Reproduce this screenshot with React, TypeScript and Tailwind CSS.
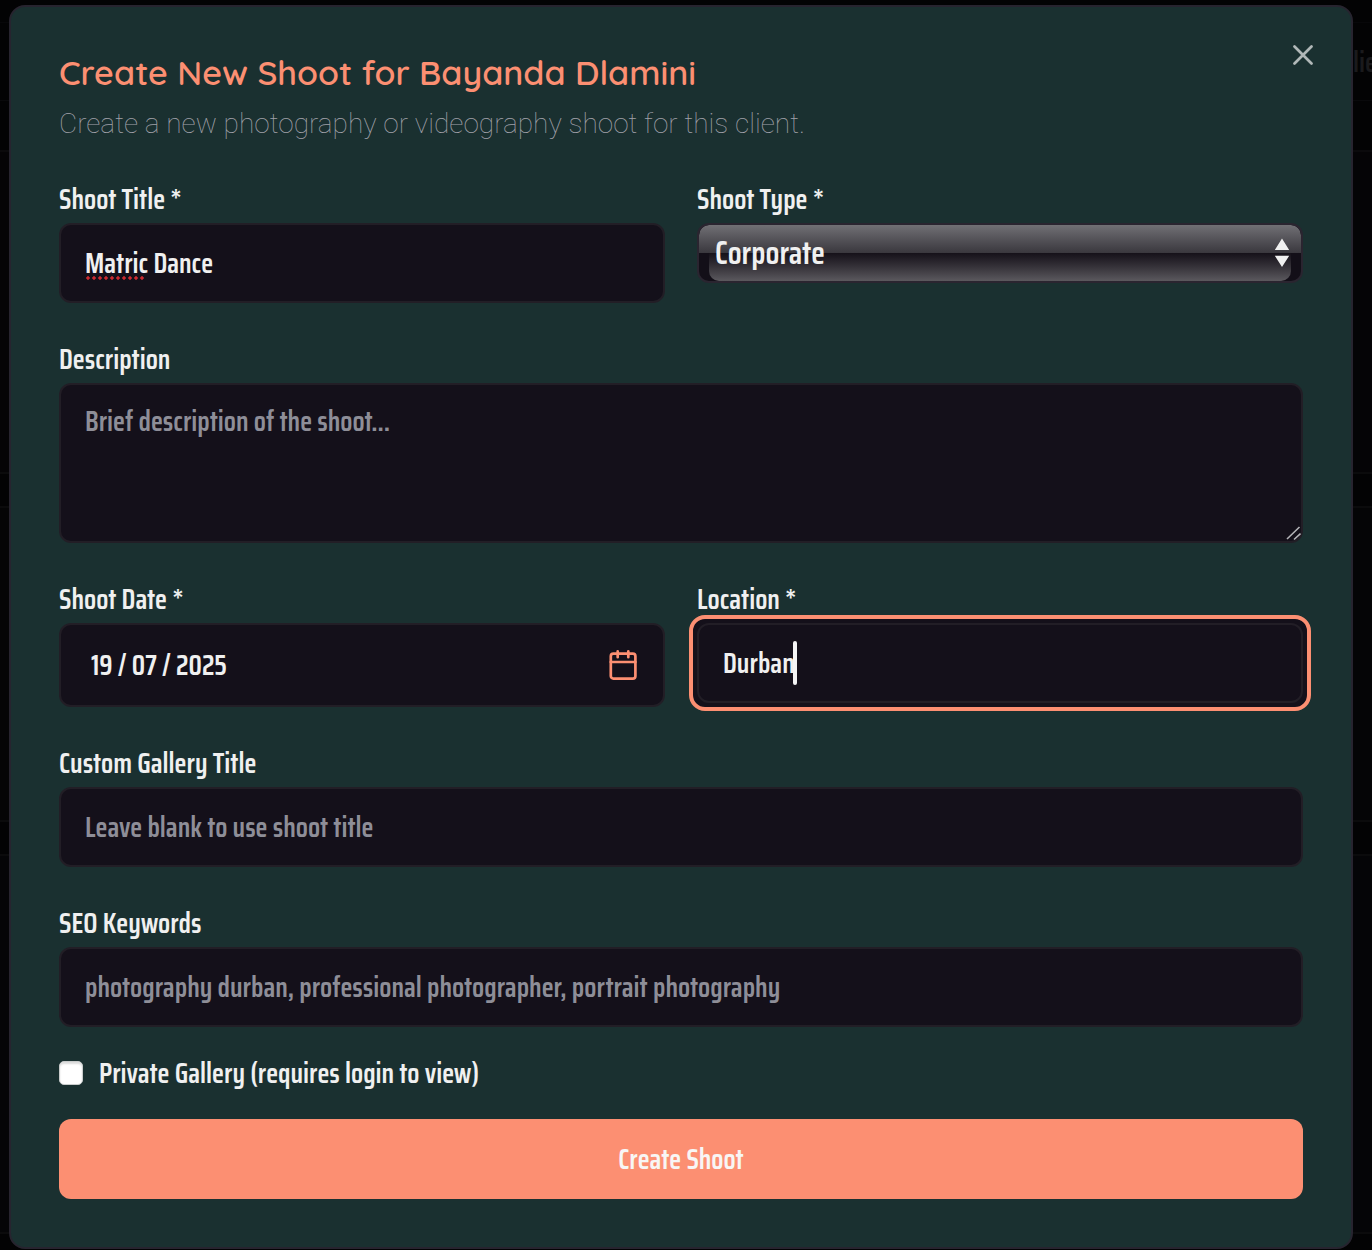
import type { ReactNode } from "react";

const bodyFont = "font-['Saira_Condensed','Roboto_Condensed',sans-serif]";

const fieldBase =
  "block w-full rounded-xl border-2 border-[#221e26] bg-[#14101a] px-6 text-[28px] leading-8 font-semibold text-[#f0f0f0] placeholder:text-[#8e8e98] outline-none";

function Field({ id, label, children }: { id: string; label: string; children: ReactNode }) {
  return (
    <div className="flex min-w-0 flex-1 flex-col gap-3">
      <label htmlFor={id} className="text-[28px] leading-6 font-semibold text-[#f0f0f0]">
        {label}
      </label>
      {children}
    </div>
  );
}

function CalendarIcon() {
  return (
    <svg width="28" height="30" viewBox="0 0 28 30" fill="none" stroke="#fc8f72" strokeWidth="2.7" strokeLinecap="round">
      <rect x="1.8" y="3.6" width="24.6" height="25" rx="2.6" />
      <path d="M1.8 12h24.6M8.7 1.4v5.8M19.3 1.4v5.8" />
    </svg>
  );
}

function Backdrop() {
  return (
    <div aria-hidden="true" className="absolute inset-0 flex flex-col overflow-hidden bg-[#030304]">
      <div className="h-[23px] border-b border-[#070709]" />
      <div className="flex h-[78px] items-center justify-end border-b border-[#09090b]">
        <span className="w-[19px] text-[28px] leading-8 font-semibold text-[#1a1a1c]">lie</span>
      </div>
      <div className="h-[51px] border-b-2 border-[#0b0a0c]" />
      <div className="h-[322px] border-b-2 border-[#0b0b0c] bg-[#050406]" />
      <div className="h-[34px] border-b-2 border-[#0b0b0c]" />
      <div className="h-[314px] border-b-2 border-[#0b0b0c] bg-[#050506]" />
      <div className="h-[34px] border-b-2 border-[#0b0b0c]" />
      <div className="h-[378px] border-b-2 border-[#0b0b0c] bg-[#050507]" />
    </div>
  );
}

export default function App() {
  return (
    <div className={`relative min-h-screen bg-[#030304] pt-[5px] pr-[19px] pb-px pl-[9px] ${bodyFont}`}>
      <Backdrop />
      <main
        role="dialog"
        aria-labelledby="dialog-title"
        className="relative rounded-2xl border-2 border-[#27242f] bg-[#1a3030] p-12"
      >
        <button type="button" aria-label="Close" className="absolute top-9 right-9 p-0.5">
          <svg width="20" height="20" viewBox="0 0 20 20" fill="none" stroke="#b1b8b8" strokeWidth="2.7" strokeLinecap="round">
            <path d="M1.5 1.5l17 17M18.5 1.5l-17 17" />
          </svg>
        </button>

        <h1 id="dialog-title" className="font-[Quicksand,sans-serif] text-[34px] leading-9 font-semibold text-[#fc8f72]">
          Create New Shoot for Bayanda Dlamini
        </h1>
        <p className="mt-3 font-[Roboto,sans-serif] text-[28px] leading-[42px] font-thin text-[#a1a1aa]">
          Create a new photography or videography shoot for this client.
        </p>

        <form className="mt-[42px]" onSubmit={(e) => e.preventDefault()}>
          <div className="flex flex-col gap-11">
            <div className="flex gap-8">
              <Field id="title" label="Shoot Title *">
                <div className="relative">
                  <input id="title" type="text" defaultValue="Matric Dance" spellCheck={false} className={`${fieldBase} h-20`} />
                  <span className="pointer-events-none absolute top-[53px] left-[26px] h-1 w-[60px] bg-[radial-gradient(circle,#cc2a30_1.4px,transparent_2px)] bg-[length:6px_4px] bg-repeat-x" />
                </div>
              </Field>
              <Field id="type" label="Shoot Type *">
                <div className="relative flex h-[60px] flex-col overflow-hidden rounded-xl border-2 border-[#2a2530] bg-[#130f18]">
                  <div className="flex-1 rounded-t-[10px] bg-linear-to-b from-[#717075] to-[#3a383e]" />
                  <div className="mx-2.5 flex-1 rounded-b-[10px] bg-linear-to-b from-[#151119] to-[#5b595e]" />
                  <select
                    id="type"
                    defaultValue="Corporate"
                    className="absolute inset-0 w-full appearance-none bg-transparent px-4 text-[32px] font-semibold text-[#f0f0f0] outline-none"
                  >
                    <option>Corporate</option>
                  </select>
                  <svg
                    width="16"
                    height="30"
                    viewBox="0 0 16 30"
                    fill="#f0f0f0"
                    className="pointer-events-none absolute top-3 right-[11px]"
                  >
                    <path d="M8 1.5L15.2 13H.8zM8 30L15.2 18.8H.8z" />
                  </svg>
                </div>
              </Field>
            </div>

            <Field id="description" label="Description">
              <div className="relative">
                <textarea
                  id="description"
                  placeholder="Brief description of the shoot..."
                  className={`${fieldBase} h-40 resize-none py-5`}
                />
                <svg
                  width="16"
                  height="16"
                  viewBox="0 0 16 16"
                  fill="none"
                  stroke="#b4b4b8"
                  strokeWidth="1.6"
                  className="pointer-events-none absolute right-0.5 bottom-0.5"
                >
                  <path d="M2 14L14.5 2M9 14.5L15.5 8.5" />
                </svg>
              </div>
            </Field>

            <div className="flex gap-8">
              <Field id="date" label="Shoot Date *">
                <div className="relative">
                  <input id="date" type="text" defaultValue="19 / 07 / 2025" className={`${fieldBase} h-[84px] pl-[30px]`} />
                  <button type="button" aria-label="Open calendar" className="absolute top-[27px] right-7">
                    <CalendarIcon />
                  </button>
                </div>
              </Field>
              <Field id="location" label="Location *">
                <div className="-m-2 rounded-2xl border-4 border-[#fc8f72] bg-[#14101a] p-1">
                  <div className="relative">
                    <input
                      id="location"
                      type="text"
                      defaultValue="Durban"
                      spellCheck={false}
                      className={`${fieldBase} h-20`}
                    />
                    <span className="pointer-events-none absolute top-[18px] left-24 h-11 w-1 rounded-full bg-[#f5f5f5]" />
                  </div>
                </div>
              </Field>
            </div>

            <Field id="gallery" label="Custom Gallery Title">
              <input id="gallery" type="text" placeholder="Leave blank to use shoot title" className={`${fieldBase} h-20`} />
            </Field>

            <Field id="seo" label="SEO Keywords">
              <input
                id="seo"
                type="text"
                placeholder="photography durban, professional photographer, portrait photography"
                className={`${fieldBase} h-20`}
              />
            </Field>
          </div>

          <div className="mt-8 flex h-7 items-center gap-4">
            <input
              id="private"
              type="checkbox"
              className="size-6 appearance-none rounded-[5px] border border-[#c9cccc] bg-white shadow-[inset_0_2px_2px_#dcdcdc]"
            />
            <label htmlFor="private" className="text-[28px] leading-7 font-semibold text-[#f0f0f0]">
              Private Gallery (requires login to view)
            </label>
          </div>

          <button type="submit" className="mt-8 block h-20 w-full rounded-xl bg-[#fc8f72] text-[28px] font-semibold text-[#f8f6f5]">
            Create Shoot
          </button>
        </form>
      </main>
    </div>
  );
}
